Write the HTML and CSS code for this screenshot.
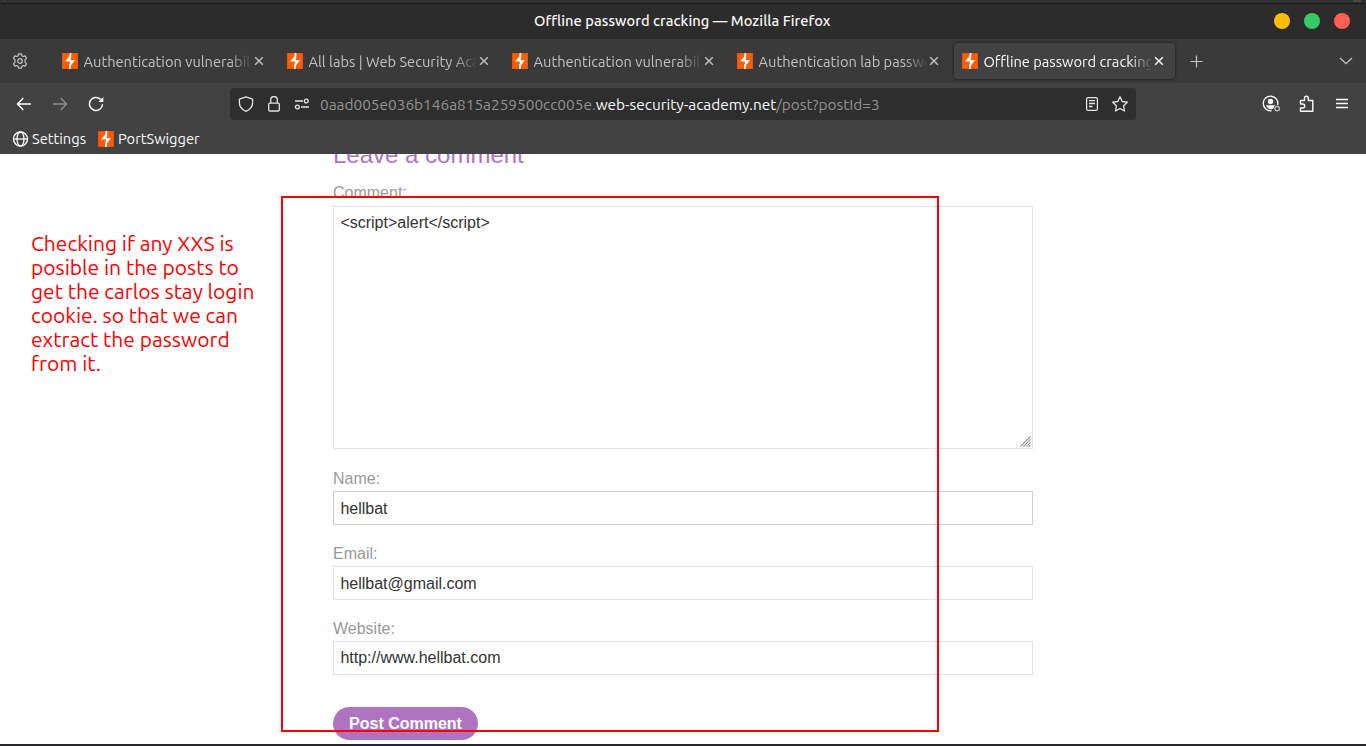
FILE: index.html
```
<!DOCTYPE html>
<html lang="en">
<head>
<meta charset="utf-8">
<title>Offline password cracking</title>
<link rel="stylesheet" href="styles.css">
</head>
<body>
<svg class="defs" width="0" height="0" aria-hidden="true">
  <symbol id="bolt" viewBox="0 0 16 16">
    <rect width="16" height="16" fill="#d9540f"/>
    <rect x=".7" y=".7" width="14.600" height="14.600" fill="#ff5c00"/>
    <path d="M9.400 0 9.200 4.600 8.600 6.900 12.900 7.100 9 12.400 8.700 16 7 16 7.100 12.300 8.300 8.800 3.200 8.300 7.300 3.400 7.600 0Z" fill="#fff"/>
  </symbol>
  <symbol id="close" viewBox="0 0 10 10"><path d="M1.2 1.2 8.8 8.8M8.8 1.2 1.2 8.8" fill="none" stroke="currentColor" stroke-width="1.4"/></symbol>
</svg>
<div class="window">
  <div class="desk-edge"><i></i><i></i></div>
  <header class="titlebar">
    <span class="title">Offline password cracking — Mozilla Firefox</span>
    <div class="lights"><i class="yellow"></i><i class="green"></i><i class="red"></i></div>
  </header>
  <nav class="tabs">
    <svg class="gear" width="16" height="16" viewBox="0 0 16 16" fill="none" stroke="#c6c6c6" stroke-width="1.2" stroke-linejoin="round"><path d="M6.6.8h2.8l.5 2 1.2.7 2-.6 1.4 2.4-1.5 1.5v2.4l1.5 1.5-1.4 2.4-2-.6-1.2.7-.5 2H6.600l-.5-2-1.200-.7-2 .6-1.400-2.400 1.500-1.500V6.800L1.500 5.300l1.400-2.400 2 .6 1.200-.7z"/><circle cx="8" cy="8" r="2.300"/></svg>
    <div class="tab"><svg class="fav"><use href="#bolt"/></svg><span class="label">Authentication vulnerabil</span><svg class="x"><use href="#close"/></svg></div>
    <div class="tab"><svg class="fav"><use href="#bolt"/></svg><span class="label">All labs | Web Security Aca</span><svg class="x"><use href="#close"/></svg></div>
    <div class="tab"><svg class="fav"><use href="#bolt"/></svg><span class="label">Authentication vulnerabil</span><svg class="x"><use href="#close"/></svg></div>
    <div class="tab"><svg class="fav"><use href="#bolt"/></svg><span class="label">Authentication lab passwo</span><svg class="x"><use href="#close"/></svg></div>
    <div class="tab active"><svg class="fav"><use href="#bolt"/></svg><span class="label">Offline password cracking</span><svg class="x"><use href="#close"/></svg></div>
    <svg class="plus" width="14" height="14" viewBox="0 0 14 14" stroke="#c6c6c6" stroke-width="1.200"><path d="M6.500 1.500v12M.5 7.500h12"/></svg>
    <svg class="chevron" width="14" height="8" viewBox="0 0 14 8" fill="none" stroke="#c6c6c6" stroke-width="1.300"><path d="M1 1l6 5.700L13 1"/></svg>
  </nav>
  <div class="toolbar">
    <div class="history">
      <svg width="16" height="16" viewBox="0 0 16 16" fill="none" stroke="#fbfbfe" stroke-width="1.500"><path d="M15 8H1.500M7.300 2 1.500 8l5.800 6"/></svg>
      <svg width="16" height="16" viewBox="0 0 16 16" fill="none" stroke="#8c8c8c" stroke-width="1.500"><path d="M1 8h13.500M8.700 2l5.800 6-5.800 6"/></svg>
      <svg width="16" height="16" viewBox="0 0 16 16" fill="none" stroke="#fbfbfe" stroke-width="1.500"><path d="M14.500 8.200A6.500 6.500 0 1 1 12.600 3.400"/><path d="M15.300 1v5h-5z" fill="#fbfbfe" stroke="none"/></svg>
    </div>
    <div class="urlbar">
      <svg width="16" height="16" viewBox="0 0 16 16" fill="none" stroke="#e4e4e4" stroke-width="1.300" stroke-linejoin="round"><path d="M8 .8 14.600 3.200v3.600c0 3.800-2.600 6.800-6.600 8.500-4-1.700-6.600-4.700-6.600-8.500V3.200z"/></svg>
      <svg width="16" height="16" viewBox="0 0 16 16" fill="none" stroke="#e4e4e4" stroke-width="1.300"><rect x="2.700" y="7.200" width="10.600" height="7.800" rx="1.200"/><path d="M4.700 7V3.800a3.300 3.300 0 0 1 6.600 0V7"/></svg>
      <svg width="16" height="16" viewBox="0 0 16 16" fill="none" stroke="#e4e4e4" stroke-width="1.300"><path d="M1 5h8M7 11h8"/><circle cx="12.300" cy="5" r="1.900"/><circle cx="3.400" cy="11" r="1.900"/></svg>
      <div class="url"><span class="u1">0aad005e036b146a815a259500cc005e.</span><span class="u2">web-security-academy.net</span><span class="u3">/post?postId=3</span></div>
      <svg class="reader" width="16" height="16" viewBox="0 0 16 16" fill="none" stroke="#e4e4e4" stroke-width="1.300"><rect x="2.600" y="1.600" width="10.800" height="12.800" rx="1.500"/><path d="M5 4.600h6M5 7.500h6M5 10.500h3.500"/></svg>
      <svg width="16" height="16" viewBox="0 0 16 16" fill="none" stroke="#e4e4e4" stroke-width="1.300" stroke-linejoin="round"><path d="m8 .8 2.200 4.700 5.100.7-3.700 3.600.9 5.200L8 12.500 3.500 15l.9-5.200L.7 6.200l5.100-.7z"/></svg>
    </div>
    <div class="actions">
      <svg width="18" height="18" viewBox="0 0 18 18" fill="none"><path d="M15.700 10A7.300 7.300 0 1 0 9.500 15.700" stroke="#fbfbfe" stroke-width="1.400"/><circle cx="8.500" cy="6.500" r="2.700" fill="#fbfbfe"/><path d="M3.800 10.200h9.500l-1.400 1.500-.3 1.900c-2.600 1.500-6 .7-7.800-3.400z" fill="#fbfbfe"/><circle cx="15.200" cy="13.600" r="2.300" stroke="#c0c0c0" stroke-width="1.200"/></svg>
      <svg width="16" height="18" viewBox="0 0 16 18" fill="none" stroke="#fbfbfe" stroke-width="1.400" stroke-linejoin="round"><path d="M1.500 8V5.500h4V3.200a1.900 1.900 0 0 1 3.800 0v2.300h4.500V16.300H1.500V13h2.200a1.900 1.900 0 0 0 0-4H1.500z"/></svg>
      <svg width="14" height="14" viewBox="0 0 14 14" stroke="#fbfbfe" stroke-width="1.300"><path d="M1 2.500h12M1 6.500h12M1 10.500h12"/></svg>
    </div>
  </div>
  <div class="bookmarks">
    <svg width="16" height="16" viewBox="0 0 16 16" fill="none" stroke="#fbfbfe" stroke-width="1.300"><circle cx="7.500" cy="8" r="7"/><ellipse cx="7.500" cy="8" rx="3.500" ry="7"/><path d="M.5 8h14"/></svg>
    <span class="b1">Settings</span>
    <svg class="fav"><use href="#bolt"/></svg>
    <span class="b2">PortSwigger</span>
  </div>
  <main class="page">
    <form class="comment-form">
      <h2>Leave a comment</h2>
      <label>Comment:</label>
      <div class="area"><textarea spellcheck="false">&lt;script&gt;alert&lt;/script&gt;</textarea>
        <svg class="grip" width="11" height="11" viewBox="0 0 11 11" stroke="#777" stroke-width="1.100" stroke-dasharray="1.400 .4"><path d="M.5 10.500l10-10M3.500 10.500l7-7M6.500 10.500l4-4M9 10.500l1.500-1.500"/></svg>
      </div>
      <label class="low">Name:</label>
      <input class="hover low-text" value="hellbat">
      <label class="low">Email:</label>
      <input class="low-text" value="hellbat@gmail.com">
      <label class="low">Website:</label>
      <input value="http://www.hellbat.com">
      <button type="button">Post Comment</button>
    </form>
    <div class="frame"></div>
    <div class="note"><span>Checking if any XXS is</span><span>posible in the posts to</span><span>get the carlos stay login</span><span>cookie. so that we can</span><span>extract the password</span><span>from it.</span></div>
  </main>
  <div class="bottom"></div>
</div>
</body>
</html>
```
FILE: styles.css
```
* { box-sizing: border-box; }
body { margin: 0; background: #fff; font-family: "Ubuntu", "Noto Sans", sans-serif; font-size: 14.67px; overflow: hidden; }
svg { display: block; flex: none; }
.defs { position: absolute; }
.window { width: 1366px; height: 746px; display: flex; flex-direction: column; }
.desk-edge { height: 4px; flex: none; background: #303030; border-bottom: 1px solid #1b1b1b; display: flex; justify-content: space-between; padding: 0 5px 0 4px; }
.desk-edge i { width: 1px; height: 2px; background: #4c4c4c; }
.desk-edge i + i { width: 8px; background: #484848; }
.titlebar { height: 35px; flex: none; background: #2c2c2c; color: #f7f7f7; display: flex; align-items: center; padding: 0 16px 0 534px; font-weight: 500; }
.title { letter-spacing: .04px; padding-bottom: 2px; }
.title, .label, .url span, .bookmarks span, .note span { white-space: nowrap; }
.lights { display: flex; gap: 14px; margin-left: auto; padding-bottom: 1px; }
.lights i { width: 16px; height: 16px; border-radius: 50%; }
.yellow { background: #ffbd0a; }
.green { background: #38c968; }
.red { background: #ff5f52; }
.tabs { height: 44px; flex: none; background: #3a3a3a; display: flex; align-items: center; padding: 0 14px 0 12px; color: #c2c2c2; }
.gear { margin-right: 26px; }
.tab { width: 221px; height: 36px; margin-right: 4px; border-radius: 4px; display: flex; align-items: center; padding: 0 10px 0 8px; }
.active { background: #424242; color: #fbfbfe; box-shadow: 0 0 3px rgba(0, 0, 0, .65); }
.fav { width: 16px; height: 16px; }
.label { width: 167.5px; margin-left: 5.5px; line-height: 24px; padding-top: 1px; -webkit-mask-image: linear-gradient(to right, #000 145px, transparent 169px); mask-image: linear-gradient(to right, #000 145px, transparent 169px); }
.x { width: 10px; height: 10px; margin-left: 3px; }
.plus { margin-left: 11px; }
.chevron { margin-left: auto; margin-right: -1px; }
.toolbar { height: 42px; flex: none; background: #424242; display: flex; align-items: center; padding: 0 17px 0 16px; }
.history { display: flex; gap: 20px; width: 214px; }
.urlbar { width: 906px; height: 32px; border-radius: 4px; background: #2e2e2e; display: flex; align-items: center; gap: 12px; padding: 0 8px; }
.url { display: flex; color: #929292; margin-left: -2px; font-size: 15.4px; padding-top: 1px; }
.u2 { color: #fbfbfe; }
.reader { margin-left: auto; }
.actions { display: flex; align-items: center; gap: 19px; margin-left: auto; }
.actions svg:last-child { margin-left: 1px; }
.bookmarks { height: 29px; flex: none; background: #424242; color: #fbfbfe; display: flex; align-items: center; padding: 0 0 1px 13px; }
.bookmarks span { padding-bottom: 2px; }
.b1 { width: 66px; margin-left: 3px; }
.b2 { margin-left: 4px; }
.page { position: relative; height: 590px; flex: none; overflow: hidden; background: #fff; padding-left: 333px; font-family: "Liberation Sans", Arial, sans-serif; }
.comment-form { width: 700px; display: flex; flex-direction: column; font-size: 16px; }
h2 { margin: -14px 0 14px; font-size: 24px; line-height: 30px; font-weight: 400; color: #ae74c2; }
label { line-height: 18px; height: 22px; color: #999; }
.low { padding-top: 1px; }
textarea, input { display: block; width: 700px; border: 1px solid #e3e3e3; outline: 0; background: #fff; color: #333; padding: 0 6.4px; margin: 0; font: 16px "Liberation Sans", Arial, sans-serif; border-radius: 0; }
.area { position: relative; height: 243px; margin-bottom: 20px; }
textarea { height: 243px; resize: none; padding: 7px 6.4px; overflow: hidden; }
.grip { position: absolute; right: 2px; bottom: 2px; }
input { height: 34px; margin-bottom: 19px; }
.low-text { padding-top: 2px; }
.hover { border-color: #c8cccc; }
button { width: 145px; height: 33px; margin-top: 13px; border: 0; border-radius: 17px; background: #ae74c2; color: #fff; font: bold 16px "Liberation Sans", Arial, sans-serif; padding: 0; }
.frame { position: absolute; left: 281px; top: 42px; width: 658px; height: 536px; border: 2px solid #f00; }
.note { position: absolute; left: 31px; top: 77px; display: flex; flex-direction: column; align-items: flex-start; color: #f00; font: 21px/24px "Ubuntu", "Noto Sans", sans-serif; }
.bottom { height: 2px; flex: none; background: #29292c; }
```
